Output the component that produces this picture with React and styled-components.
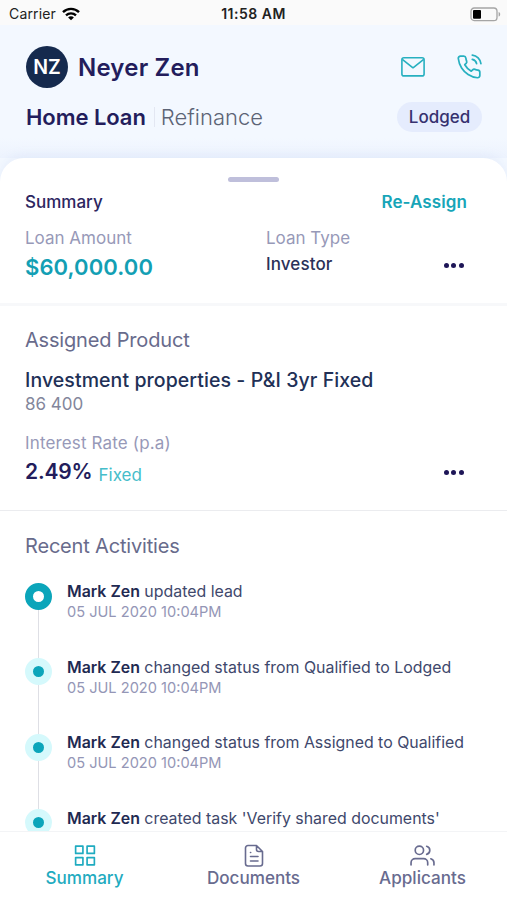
import React from "react";
import styled, { createGlobalStyle } from "styled-components";
import { FiGrid, FiPhoneCall, FiUsers } from "react-icons/fi";

const activities = [
  { id: 1, user: "Mark Zen", text: "updated lead", time: "05 JUL 2020 10:04PM" },
  { id: 2, user: "Mark Zen", text: "changed status from Qualified to Lodged", time: "05 JUL 2020 10:04PM" },
  { id: 3, user: "Mark Zen", text: "changed status from Assigned to Qualified", time: "05 JUL 2020 10:04PM" },
  { id: 4, user: "Mark Zen", text: "created task 'Verify shared documents'" },
];

function StatusBar() {
  return (
    <Status>
      <Carrier>
        Carrier
        <svg width="18" height="14" viewBox="0 0 18 14" fill="none" stroke="#000">
          <path d="M1 5.2C5.4 0.8 12.6 0.8 17 5.2" strokeWidth="2.4" />
          <path d="M4 8.3C6.8 5.6 11.2 5.6 14 8.3" strokeWidth="2.3" />
          <path d="M9 13.2L6.1 10.4C7.7 8.9 10.3 8.9 11.9 10.4Z" fill="#000" stroke="none" />
        </svg>
      </Carrier>
      <Clock>11:58 AM</Clock>
      <Battery>
        <svg width="31" height="15" viewBox="0 0 31 15" fill="none">
          <rect x="1" y="1" width="26" height="12.6" rx="3.2" stroke="#a5a5a5" strokeWidth="1.3" />
          <rect x="3" y="3" width="8" height="8.8" rx="1" fill="#000" />
          <path d="M28.6 5v4.6c1.1-.4 1.6-1.2 1.6-2.3S29.7 5.4 28.6 5Z" fill="#a5a5a5" />
        </svg>
      </Battery>
    </Status>
  );
}

function MailIcon() {
  return (
    <svg width="26" height="22" viewBox="0 0 26 22" fill="none" stroke="currentColor" strokeWidth="1.6" strokeLinejoin="round">
      <rect x="1.9" y="1.7" width="22.2" height="18.2" rx="2" />
      <path d="M2.3 3.3L13 11.8L23.7 3.3" />
    </svg>
  );
}

function DocumentIcon() {
  return (
    <svg width="20" height="24" viewBox="0 0 20 24" fill="none" stroke="currentColor" strokeWidth="1.6" strokeLinecap="round" strokeLinejoin="round">
      <path d="M12.5 2H4a2.5 2.500 0 0 0-2.500 2.500v15.500A2.500 2.500 0 0 0 4 22.500h12a2.500 2.500 0 0 0 2.500-2.500V8L12.500 2v4a2 2 0 0 0 2 2h4" />
      <path d="M6.500 9h.2M6.500 13h7.500M6.500 17.500h7.500" />
    </svg>
  );
}

function More() {
  return (
    <Dots>
      <i />
      <i />
      <i />
    </Dots>
  );
}

function App() {
  return (
    <>
      <GlobalStyle />
      <Screen>
        <StatusBar />
        <Header>
          <HeaderRow>
            <Avatar>NZ</Avatar>
            <Name>Neyer Zen</Name>
            <Actions>
              <MailIcon />
              <FiPhoneCall size={26} strokeWidth={1.6} />
            </Actions>
          </HeaderRow>
          <LoanRow>
            <LoanName>Home Loan</LoanName>
            <LoanKind>Refinance</LoanKind>
            <Badge>Lodged</Badge>
          </LoanRow>
        </Header>

        <Sheet>
          <Handle />
          <SummarySection>
            <Between>
              <Heading>Summary</Heading>
              <Assign>Re-Assign</Assign>
            </Between>
            <Details>
              <div>
                <Label>Loan Amount</Label>
                <Amount>$60,000.00</Amount>
              </div>
              <div>
                <Label>Loan Type</Label>
                <LoanType>Investor</LoanType>
              </div>
              <More />
            </Details>
          </SummarySection>

          <ProductSection>
            <Title>Assigned Product</Title>
            <Product>Investment properties - P&amp;I 3yr Fixed</Product>
            <Code>86 400</Code>
            <RateLabel>Interest Rate (p.a)</RateLabel>
            <RateRow>
              <Rate>2.49%</Rate>
              <Fixed>Fixed</Fixed>
              <More />
            </RateRow>
          </ProductSection>

          <ActivitySection>
            <Title>Recent Activities</Title>
            <Timeline>
              {activities.map((item, index) => (
                <Activity key={item.id}>
                  <Track>
                    <Dot $active={index === 0} />
                    <Line />
                  </Track>
                  <div>
                    <Message>
                      <b>{item.user}</b> {item.text}
                    </Message>
                    {item.time && <Time>{item.time}</Time>}
                  </div>
                </Activity>
              ))}
            </Timeline>
          </ActivitySection>
        </Sheet>

        <TabBar>
          <Tab $active>
            <FiGrid size={26} strokeWidth={1.6} />
            Summary
          </Tab>
          <Tab>
            <DocumentIcon />
            Documents
          </Tab>
          <Tab>
            <FiUsers size={25} strokeWidth={1.6} />
            Applicants
          </Tab>
        </TabBar>
      </Screen>
    </>
  );
}

export default App;

const GlobalStyle = createGlobalStyle`
  * {
    box-sizing: border-box;
  }
  body {
    margin: 0;
    font-family: Inter, "Liberation Sans", sans-serif;
    background: #fff;
  }
`;

const Screen = styled.div`
  width: 507px;
  height: 900px;
  display: flex;
  flex-direction: column;
  overflow: hidden;
  background: #f3f8ff;
  white-space: nowrap;
`;

const Status = styled.div`
  display: grid;
  grid-template-columns: 1fr auto 1fr;
  align-items: center;
  flex: none;
  height: 25px;
  padding: 3px 6px 0 9px;
  background: #fafafa;
  color: #222;
`;

const Carrier = styled.div`
  display: flex;
  align-items: center;
  gap: 6px;
  font-size: 14px;
  line-height: 20px;
  letter-spacing: 0.15px;
`;

const Clock = styled.div`
  margin-right: 3px;
  font-size: 14px;
  font-weight: 600;
  line-height: 20px;
  letter-spacing: 0.5px;
`;

const Battery = styled.div`
  display: flex;
  justify-content: flex-end;
`;

const Header = styled.div`
  flex: none;
  height: 133px;
  padding: 21px 25px 0 26px;
  background: linear-gradient(#f3f8ff 85%, #edf3fe);
`;

const HeaderRow = styled.div`
  display: flex;
  align-items: center;
  height: 42px;
`;

const Avatar = styled.div`
  width: 42px;
  height: 42px;
  border-radius: 50%;
  background: #152a4e;
  color: #fff;
  font-size: 19.5px;
  font-weight: 600;
  line-height: 42px;
  text-align: center;
`;

const Name = styled.div`
  margin-left: 10px;
  color: #231d5c;
  font-size: 24px;
  font-weight: 600;
  letter-spacing: 0.2px;
`;

const Actions = styled.div`
  display: flex;
  align-items: center;
  gap: 30px;
  margin-left: auto;
  color: #27b0c0;
`;

const LoanRow = styled.div`
  display: flex;
  align-items: center;
  height: 30px;
  margin-top: 14px;
`;

const LoanName = styled.div`
  padding-right: 8px;
  border-right: 1px solid #e3e7f2;
  color: #231d5c;
  font-size: 22px;
  font-weight: 600;
  line-height: 20px;
  letter-spacing: -0.05px;
`;

const LoanKind = styled.div`
  margin-left: 6px;
  color: #5c6476;
  font-size: 22px;
  font-weight: 300;
`;

const Badge = styled.div`
  width: 85px;
  height: 30px;
  margin-left: auto;
  border-radius: 15px;
  background: #e5ecfd;
  color: #36316f;
  font-size: 17px;
  font-weight: 500;
  line-height: 30px;
  text-align: center;
`;

const Sheet = styled.div`
  flex: 1;
  min-height: 0;
  overflow: hidden;
  border-radius: 24px 24px 0 0;
  background: #fff;
  box-shadow: 0 -3px 10px rgba(170, 190, 230, 0.15);
`;

const Handle = styled.div`
  width: 51px;
  height: 5px;
  margin: 19px auto 0;
  border-radius: 3px;
  background: #bfbfdb;
`;

const SummarySection = styled.div`
  height: 124px;
  padding: 9px 40px 0 25px;
  border-bottom: 3px solid #f7f8fa;
`;

const Between = styled.div`
  display: flex;
  align-items: center;
  justify-content: space-between;
`;

const Heading = styled.div`
  color: #2c265f;
  font-size: 17px;
  font-weight: 500;
  line-height: 22px;
`;

const Assign = styled.div`
  color: #17a5b8;
  font-size: 17px;
  font-weight: 600;
  line-height: 22px;
  letter-spacing: 0.1px;
`;

const Details = styled.div`
  display: grid;
  grid-template-columns: 241px 1fr auto;
  margin-top: 14px;

  > :last-child {
    margin-top: 28px;
  }
`;

const Label = styled.div`
  color: #9799b8;
  font-size: 17px;
  line-height: 22px;
`;

const Amount = styled.div`
  margin-top: 3px;
  color: #139fb4;
  font-size: 22px;
  font-weight: 600;
  line-height: 30px;
  letter-spacing: 0.1px;
`;

const LoanType = styled.div`
  margin-top: 4px;
  color: #2b3158;
  font-size: 17px;
  font-weight: 500;
  line-height: 22px;
  letter-spacing: 0.1px;
`;

const Dots = styled.div`
  display: flex;
  align-items: center;
  gap: 2.5px;
  height: 20px;
  margin-right: 3.5px;

  i {
    width: 5px;
    height: 5px;
    border-radius: 50%;
    background: #1e1657;
  }
`;

const ProductSection = styled.div`
  height: 205px;
  padding: 21px 40px 0 25px;
  border-bottom: 1px solid #ebecef;
`;

const Title = styled.div`
  color: #686b8c;
  font-size: 20px;
  line-height: 26px;
  letter-spacing: -0.18px;
`;

const Product = styled.div`
  margin-top: 14px;
  color: #213056;
  font-size: 19.5px;
  font-weight: 500;
  line-height: 26px;
  letter-spacing: 0.08px;
`;

const Code = styled.div`
  color: #83869b;
  font-size: 17px;
  line-height: 22px;
`;

const RateLabel = styled(Label)`
  margin-top: 17px;
  letter-spacing: 0.15px;
`;

const RateRow = styled.div`
  display: flex;
  align-items: center;
  margin-top: 3px;

  > :last-child {
    margin-left: auto;
  }
`;

const Rate = styled.div`
  color: #231d5c;
  font-size: 21px;
  font-weight: 600;
  line-height: 30px;
  letter-spacing: -0.15px;
`;

const Fixed = styled.div`
  margin-left: 6px;
  padding-top: 5px;
  color: #45bdca;
  font-size: 17px;
`;

const ActivitySection = styled.div`
  padding: 22px 25px 0;
`;

const Timeline = styled.div`
  margin-top: 22px;
`;

const Activity = styled.div`
  display: flex;
  gap: 15px;
  height: 75.6px;
`;

const Track = styled.div`
  display: flex;
  flex-direction: column;
  align-items: center;
  width: 27px;
  padding-top: 1.6px;
`;

const Dot = styled.div`
  flex: none;
  width: 27px;
  height: 27px;
  border: 8px solid ${({ $active }) => ($active ? "#0ba5ba" : "#d5f9fc")};
  border-radius: 50%;
  background: ${({ $active }) => ($active ? "#fff" : "#0ba5ba")};
`;

const Line = styled.div`
  flex: 1;
  width: 1px;
  margin-bottom: -2px;
  background: #dedfe5;
`;

const Message = styled.div`
  padding-top: 1px;
  color: #40486c;
  font-size: 15.9px;
  line-height: 20px;

  b {
    color: #1f2a52;
    font-weight: 600;
  }
`;

const Time = styled.div`
  color: #9496b6;
  font-size: 14.6px;
  line-height: 20px;
`;

const TabBar = styled.div`
  display: grid;
  grid-template-columns: repeat(3, 1fr);
  flex: none;
  height: 69px;
  padding-top: 11px;
  border-top: 1px solid #f3f4f6;
  background: #fff;
`;

const Tab = styled.div`
  display: flex;
  flex-direction: column;
  align-items: center;
  color: ${({ $active }) => ($active ? "#1fabc0" : "#686b8f")};
  font-size: 17.1px;
  font-weight: 500;
  line-height: 20px;

  svg {
    height: 25px;
  }
`;
